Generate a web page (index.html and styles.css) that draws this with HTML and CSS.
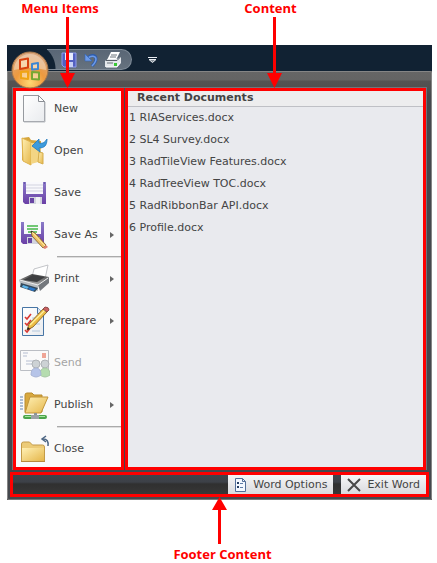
FILE: index.html
```html
<!DOCTYPE html>
<html lang="en">
<head>
<meta charset="utf-8">
<title>Application menu</title>
<link rel="stylesheet" href="styles.css">
</head>
<body>
<svg width="0" height="0" class="defs" aria-hidden="true">
  <defs>
    <linearGradient id="gold" x1="0" y1="0" x2="1" y2="1"><stop offset="0" stop-color="#fff0b4"/><stop offset="1" stop-color="#e5b64a"/></linearGradient>
    <linearGradient id="violet" x1="0" y1="0" x2="0" y2="1"><stop offset="0" stop-color="#8a7bc8"/><stop offset="1" stop-color="#6a3fa6"/></linearGradient>
    <linearGradient id="paper" x1="0" y1="0" x2="1" y2="1"><stop offset="0" stop-color="#ffffff"/><stop offset="1" stop-color="#e9ebee"/></linearGradient>
    <linearGradient id="steel" x1="0" y1="0" x2="0" y2="1"><stop offset="0" stop-color="#454545"/><stop offset="1" stop-color="#b5b5b5"/></linearGradient>
    <radialGradient id="orb" cx=".5" cy=".85" r=".8"><stop offset="0" stop-color="#ffd873"/><stop offset=".5" stop-color="#ee9a3e"/><stop offset="1" stop-color="#d9a57a"/></radialGradient>
  </defs>
</svg>

<div class="captions">
  <span class="caption">Menu Items</span>
  <span class="caption">Content</span>
</div>

<main class="window">
  <header class="titlebar">
    <button class="orb" aria-label="Application menu">
      <svg width="38" height="38" viewBox="0 0 38 38">
        <circle cx="19" cy="19" r="18" fill="url(#orb)" stroke="#a5764a"/>
        <path d="M3 19a16 16 0 0 1 32 0q-16-4-32 0z" fill="#fff" opacity=".36"/>
        <g fill="#fbe3c0" fill-opacity=".6" stroke-width="2" stroke-linejoin="round">
          <path d="M9 9l8-1.500v9L9 18z" stroke="#d8410f"/>
          <path d="M21 13l6-1v6l-6 .500z" stroke="#3c86d4"/>
          <path d="M10 21l7-.500V28l-7-1z" stroke="#efa414"/>
          <path d="M21 21l7 .500v7L21 28z" stroke="#77a832"/>
        </g>
      </svg>
    </button>
    <div class="quick">
      <button aria-label="Save"><svg width="16" height="16" viewBox="0 0 16 16"><path d="M1 1h14v14H3l-2-2z" fill="#5260c0" stroke="#8d9bee"/><path d="M4 1h8v7H4z" fill="#e7ecff"/><path d="M5 10h7v5H5z" fill="#c6cff4"/><path d="M6 11h2v4H6z" fill="#3d469f"/></svg></button>
      <button aria-label="Undo"><svg width="16" height="16" viewBox="0 0 16 16"><path d="M5 6c3-4 8-3 8 1 0 3-2 5-4 7" fill="none" stroke="#2e5dae" stroke-width="3"/><path d="M5 6c3-3 8-2 8 1 0 3-2 5-4 7" fill="none" stroke="#6d9be9" stroke-width="1.500"/><path d="M2 2v7h7z" fill="#6d9be9" stroke="#3668b8" stroke-width=".7"/></svg></button>
      <button aria-label="Quick print"><svg width="16" height="16" viewBox="0 0 16 16"><path d="M6 0h9l-4 8H2z" fill="#fff"/><path d="M6 3h6M5 5h6" stroke="#6c747d"/><path d="M0 9l3-2h9l4-2v6l-4 4H0z" fill="#e4e7eb"/><path d="M1 8.500h11l3-3" fill="none" stroke="#596069"/><path d="M2 11h6" stroke="#687079"/><path d="M9 11h3v3H9z" fill="#38c934"/><path d="M1 15h11l3-4" fill="none" stroke="#fff"/></svg></button>
    </div>
    <button class="more" aria-label="Customize quick access"><svg width="9" height="8" viewBox="0 0 9 8"><path d="M0 1.500h9" stroke="#e9edf2"/><path d="M1 3.500h7l-3.500 3z" fill="#8a939c" stroke="#e9edf2"/></svg></button>
  </header>

  <div class="frame">
    <div class="panes">
      <nav class="pane menu" aria-label="Menu items">
        <button class="item">
          <svg width="32" height="32" viewBox="0 0 32 32"><path d="M5.500 2.500h15l6 6v20h-21z" fill="url(#paper)" stroke="#969a9f"/><path d="M20.500 2.500v6h6z" fill="#fff" stroke="#8a8e94"/><path d="M6 29h21V9" fill="none" stroke="#b8bbc0"/></svg>
          <span>New</span></button>
        <button class="item">
          <svg width="32" height="32" viewBox="0 0 32 32"><path d="M4 3l7-1 2 3 10 1v20l-12 2-7-3z" fill="#d6a63d"/><path d="M4 3l9 4v23l-8-4z" fill="url(#gold)" stroke="#dfb24b"/><path d="M13 8h9l2 18-11 3z" fill="#f3d584"/><path d="M21 17l4 1v11l-5-2z" fill="url(#gold)" stroke="#d6ad4c"/><path d="M29 4c0 7-3 9-8 9l1 4-8-6 7-7v4c4 1 6-1 8-4z" fill="#3d9bdc" stroke="#2278bb" stroke-width=".8"/></svg>
          <span>Open</span></button>
        <button class="item">
          <svg width="32" height="32" viewBox="0 0 32 32"><path d="M5 5h23v22H7l-2-2z" fill="url(#violet)"/><path d="M8 5h17v12H8z" fill="#f8f8fc"/><path d="M8 8h17M8 11h17M8 14h17" stroke="#d2d3df"/><path d="M11 20h13v7H11z" fill="#d2d4de"/><path d="M12 21h4v5h-4z" fill="#6845a3"/><path d="M18 20h4v7h-4z" fill="#f0f1f4"/><path d="M6 6h1M26 6h1" stroke="#4d398d"/></svg>
          <span>Save</span></button>
        <button class="item">
          <svg width="32" height="32" viewBox="0 0 32 32"><path d="M3 3h23v22H5l-2-2z" fill="url(#violet)"/><path d="M6 3h17v12H6z" fill="#f8f8fc"/><path d="M9 7h11M9 10h11M10 13h9" stroke="#45b649" stroke-width="1.4"/><path d="M9 18h13v7H9z" fill="#d2d4de"/><path d="M10 19h4v5h-4z" fill="#6845a3"/><path d="M13 12l4 2 11 12-3 3-11-12z" fill="#efc164" stroke="#795928" stroke-width=".8"/><path d="M14 13l13 14" stroke="#fff0ad"/><path d="M13 12l2 .5-1.500 1.500z" fill="#252525"/><path d="M28 26l2 2-3 2-2-1z" fill="#df8172"/></svg>
          <span>Save As</span><i class="arrow"></i></button>
        <hr>
        <button class="item">
          <svg width="32" height="32" viewBox="0 0 32 32"><path d="M16 6l14-4-3 14-13-2z" fill="#fff" stroke="#c2c4c8"/><path d="M1 17l13-6 17 3-11 9z" fill="url(#steel)"/><path d="M5 17l10-5 12 2-8 5z" fill="#3e3f41"/><path d="M1 17l19 5v6L3 23z" fill="#b8bcc0"/><path d="M20 22l11-8v6l-9 8z" fill="#74787d"/><path d="M3 20l17 5-3 4L2 24z" fill="#34495a"/><path d="M5 22l6 2-2 2-5-2z" fill="#5db4ea"/><path d="M12 24l6 2-3 2-5-2z" fill="#2976ca"/><path d="M2 17l18 5 10-7" fill="none" stroke="#eee"/></svg>
          <span>Print</span><i class="arrow"></i></button>
        <button class="item">
          <svg width="32" height="32" viewBox="0 0 32 32"><path d="M4.500 2.500h15l6 6v22h-21z" fill="url(#paper)" stroke="#4775a5"/><path d="M19.500 2.500v6h6" fill="#dde7f2" stroke="#4775a5"/><path d="M7 12l2 2 4-5M7 18l2 2 4-5M7 25l2 2 4-5" fill="none" stroke="#d93732" stroke-width="1.6"/><path d="M14 13h8M14 19h8M14 26h8" stroke="#b4c7dc"/><path d="M9 25l2-6L25 4l4 3-14 15z" fill="#edbd45" stroke="#7a541c" stroke-width=".8"/><path d="M12 20L27 5" stroke="#fff0a0" stroke-width="1.3"/><path d="M25 4l2-2q4 0 4 3l-2 2z" fill="#cb6161" stroke="#8f4d4d"/><path d="M9 25l1-3 2 2z" fill="#222"/></svg>
          <span>Prepare</span><i class="arrow"></i></button>
        <button class="item" disabled>
          <svg width="32" height="32" viewBox="0 0 32 32"><path d="M2.500 3.500h28v20h-28z" fill="#fafafa" stroke="#717783"/><path d="M5 6h5M5 9h4M8 14h10M8 17h7" stroke="#6577a1"/><path d="M24 6h4v5h-4z" fill="#e24020"/><circle cx="18" cy="17" r="4" fill="#98a3a9" stroke="#545d65"/><circle cx="27" cy="17" r="4" fill="#98a3a9" stroke="#545d65"/><path d="M22 28q0-7 5-7t5 7q-5 4-10 0z" fill="#63b955" stroke="#458a3c"/><path d="M13 28q0-7 5-7t5 7q-5 4-10 0z" fill="#6683d4" stroke="#4762a9"/></svg>
          <span>Send</span></button>
        <button class="item">
          <svg width="32" height="32" viewBox="0 0 32 32"><path d="M2 8h3M2 11h3M2 14h3M2 17h3M2 20h3" stroke="#6486b3"/><path d="M7 6q0-2 2-2h5l2 2h8v17H7z" fill="#d8a83e" stroke="#b98b2c"/><path d="M12 8h18l-7 16H7z" fill="url(#gold)" stroke="#c2953a"/><path d="M16 24h3v4h-3z" fill="#8d9498"/><path d="M7 28h20" stroke="#4ca54b" stroke-width="4" stroke-linecap="round"/><path d="M7 27.500h20" stroke="#a5e39e"/><path d="M13 26h8v4h-8z" fill="#9ba1a5"/></svg>
          <span>Publish</span><i class="arrow"></i></button>
        <hr>
        <button class="item">
          <svg width="32" height="32" viewBox="0 0 32 32"><path d="M3.500 28V11q0-2 2-2h6l3 3h10q2 0 2 2v14z" fill="#eccb78" stroke="#c39b48"/><path d="M4 15h22v13H4z" fill="url(#gold)"/><path d="M3 28.500h24" stroke="#b98a3c"/><path d="M30 13q1-7-5-7" fill="none" stroke="#4c6583" stroke-width="1.500"/><path d="M28 3l-4 3 4 3" fill="none" stroke="#4c6583" stroke-width="1.500"/></svg>
          <span>Close</span></button>
        <svg class="pointer" width="15" height="71" viewBox="0 0 15 71"><path d="M6 0h3v56h6L7.500 71 0 56h6z" fill="red"/></svg>
      </nav>

      <section class="pane content">
        <h1>Recent Documents</h1>
        <ul>
          <li><a href="#">1 RIAServices.docx</a></li>
          <li><a href="#">2 SL4 Survey.docx</a></li>
          <li><a href="#">3 RadTileView Features.docx</a></li>
          <li><a href="#">4 RadTreeView TOC.docx</a></li>
          <li><a href="#">5 RadRibbonBar API.docx</a></li>
          <li><a href="#">6 Profile.docx</a></li>
        </ul>
        <svg class="pointer" width="15" height="71" viewBox="0 0 15 71"><path d="M6 0h3v56h6L7.500 71 0 56h6z" fill="red"/></svg>
      </section>
    </div>

    <footer class="footer">
      <button><svg width="13" height="14" viewBox="0 0 13 14"><path d="M1.500.500h7l3 3v10h-10z" fill="#f4f8ff" stroke="#536e98"/><path d="M8.500.500v3h3" fill="none" stroke="#536e98"/><path d="M3 4h2v2H3zM3 8h2v2H3z" fill="#263f64"/><path d="M6 5.500h3M6 9.500h3" stroke="#607ca6"/></svg>Word Options</button>
      <button><svg width="14" height="14" viewBox="0 0 14 14"><path d="M1 1l12 12M13 1L1 13" stroke="#484848" stroke-width="2"/></svg>Exit Word</button>
      <svg class="pointer" width="15" height="47" viewBox="0 0 15 47"><path d="M7.500 0L15 13H9v34H6V13H0z" fill="red"/></svg>
    </footer>
  </div>
</main>

<p class="caption bottom">Footer Content</p>
</body>
</html>
```
FILE: styles.css
```css
* { box-sizing: border-box; }

body {
  margin: 0;
  background: #fff;
  color: #444;
  font: 11px/16px "DejaVu Sans", sans-serif;
}

button {
  margin: 0;
  padding: 0;
  border: 0;
  background: none;
  color: inherit;
  font: inherit;
}

svg { display: block; flex: none; }
.defs { position: absolute; }

.captions {
  display: grid;
  grid-template-columns: 120px 1fr;
  height: 45px;
  text-align: center;
}

.captions .caption:last-child { padding-right: 16px; }

.caption {
  color: #f00;
  font: bold 13px/16px "Open Sans", sans-serif;
}

.bottom {
  margin: 46px 0 0;
  padding-left: 8px;
  text-align: center;
}

.window {
  margin: 0 5px 0 7px;
  background: #535353;
}

.titlebar {
  display: flex;
  align-items: flex-start;
  height: 26px;
  background: #112233;
}

.orb {
  z-index: 1;
  height: 26px;
  margin: 6px 0 0 4px;
  overflow: visible;
}

.quick {
  display: flex;
  align-items: center;
  gap: 6px;
  height: 21px;
  margin: 4px 0 0 -2px;
  padding: 0 10px 0 14px;
  border: 1px solid #7f8b98;
  border-left: 0;
  border-radius: 0 11px 11px 0;
  background:
    radial-gradient(circle at -18px 20px, #112233 26px, transparent 27px) border-box,
    linear-gradient(#596675, #66727f);
}

.more { margin: 11px 0 0 16px; }

.frame {
  padding: 15px 2px 2px;
  border: 1px solid #858585;
  border-bottom-color: #777;
  border-radius: 0 2px 2px 2px;
  background: linear-gradient(#666 0, #646464 8px, #535353 9px, #505050 16px, #45484d 24px);
}

.panes {
  display: grid;
  grid-template-columns: 112px 1fr;
  margin: 0 2px;
  border: 1px solid #70747a;
  border-width: 1px 1px 0;
}

.pane, .footer {
  position: relative;
  outline: 3px solid #f00;
  outline-offset: -3px;
}

.menu {
  margin-right: 1px;
  background: #fafafa;
}

.item {
  display: flex;
  align-items: center;
  gap: 4px;
  width: 100%;
  height: 42px;
  padding: 0 10px 0 5px;
  text-align: left;
}

.item:disabled svg { opacity: .45; }
.item:disabled { color: #a5a5a5; }

.arrow {
  margin-left: auto;
  border: solid transparent;
  border-width: 3px 0 3px 4px;
  border-left-color: #666;
}

hr {
  height: 2px;
  margin: 0 3px 0 44px;
  border: 0;
  border-top: 1px solid #aaa;
  border-bottom: 1px solid #ddd;
}

.content {
  background: #e9eaee;
}

h1 {
  margin: 0;
  height: 19px;
  padding: 2px 12px 0;
  border-bottom: 1px solid #bfc0c5;
  background: #ededee;
  font-size: 11px;
  line-height: 16px;
}

ul {
  margin: 0;
  padding: 0 4px;
  list-style: none;
}

li { line-height: 22px; }

a {
  color: inherit;
  text-decoration: none;
}

.footer {
  display: flex;
  justify-content: flex-end;
  gap: 8px;
  margin-top: 2px;
  padding: 3px;
  background: linear-gradient(#41454c 0, #3d4148 10px, #303030 12px, #393939);
}

.footer button {
  display: flex;
  align-items: center;
  gap: 6px;
  height: 19px;
  padding: 0 6px;
  background: linear-gradient(#f6f6f7, #d9dade);
}

.pointer {
  position: absolute;
  z-index: 2;
}

.menu .pointer {
  bottom: 100%;
  left: 47px;
}

.content .pointer {
  bottom: 100%;
  left: calc(50% - 9px);
}

.footer .pointer {
  top: 100%;
  left: calc(50% - 8px);
}
```
